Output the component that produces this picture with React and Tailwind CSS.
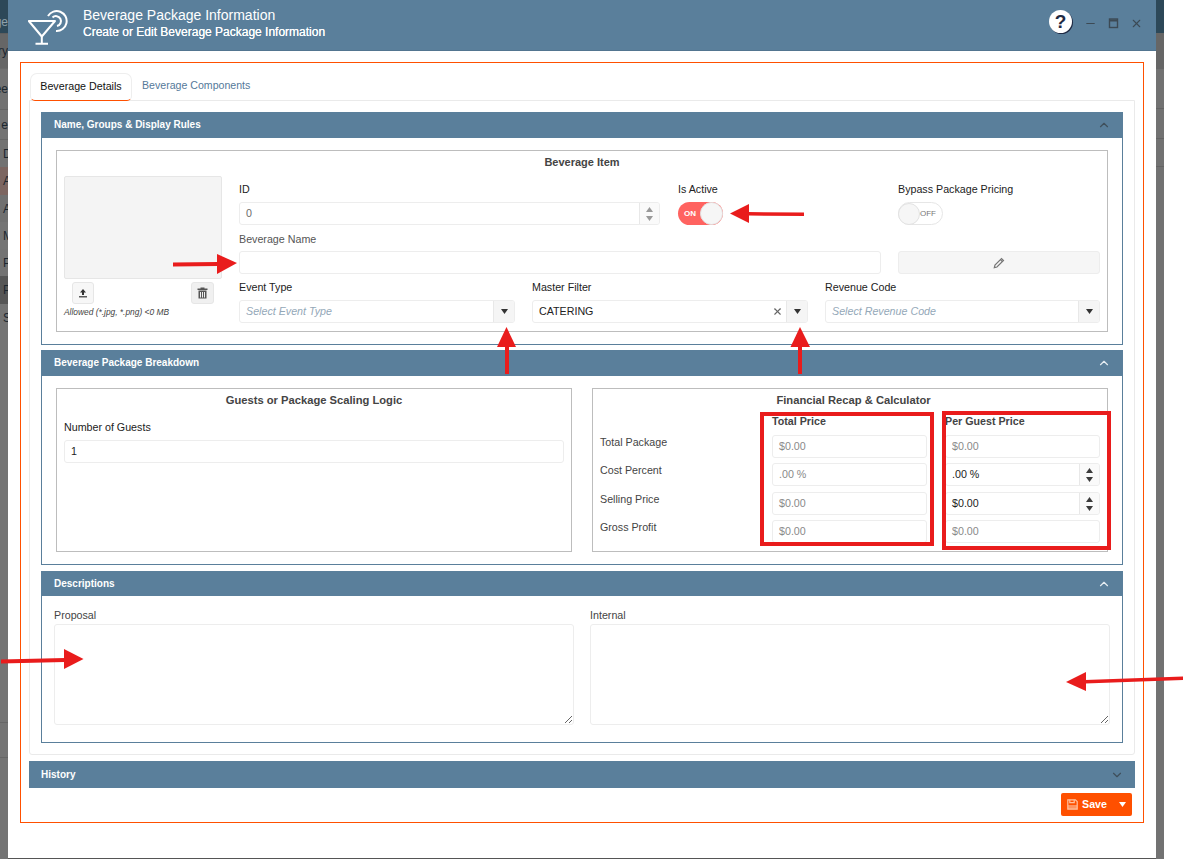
import React from "react";
import { ChevronUp, ChevronDown, X, Minus } from "lucide-react";

const font = { fontFamily: '"Liberation Sans", Arial, sans-serif' };

const stripRows = [
  ["h-[33px] bg-[#2d4858] text-[#8fa0aa] justify-end pt-[10px]", "ge"],
  ["h-[35px] bg-[#666666] border-t border-[#5e5e5e] justify-end", "try"],
  ["h-[41px] bg-[#727272] border-t border-[#6a6a6a] justify-end", "ee"],
  ["h-[30px] bg-[#737373] border-t border-[#666666] justify-end", "e"],
  ["h-[28px] bg-[#727272] border-t border-[#666666] pl-[3px]", "D"],
  ["h-[28px] bg-[#7c6560] pl-[3px]", "A"],
  ["h-[27px] bg-[#707070] pl-[3px]", "A"],
  ["h-[27px] bg-[#747474] pl-[3px]", "M"],
  ["h-[27px] bg-[#737373] pl-[3px]", "P"],
  ["h-[28px] bg-[#565656] pl-[3px]", "P"],
  ["h-[27px] bg-[#747474] pl-[3px]", "S"],
];

function Backdrop() {
  return (
    <div className="w-2 h-[859px] shrink-0 flex flex-col overflow-hidden bg-[#747474] text-[12px] text-[#1c2730]">
      {stripRows.map(([c, t], i) => (
        <div key={i} className={"flex items-center whitespace-nowrap overflow-hidden shrink-0 " + c}>
          {t}
        </div>
      ))}
      <div className="h-[391px] shrink-0" />
      <div className="h-[35px] shrink-0 border-t border-[#666666]" />
      <div className="grow border-t border-[#666666]" />
    </div>
  );
}

function BackdropRight() {
  return (
    <div className="w-2 h-[859px] shrink-0 flex flex-col bg-[#727272]">
      <div className="h-[33px] bg-[#2d4858]" />
      <div className="h-[36px] bg-[#666666]" />
      <div className="h-[40px] border-b border-[#646464]" />
      <div className="h-[30px] border-b border-[#646464]" />
      <div className="h-[28px] border-b border-[#646464]" />
    </div>
  );
}

function Logo() {
  return (
    <svg width="42" height="36" viewBox="0 0 42 36" fill="none" stroke="white" strokeWidth="2" className="ml-5 mt-[10px] shrink-0">
      <path d="M0.8 11 H27 L13.8 26.5 Z" strokeLinejoin="round" />
      <path d="M13.8 26.5 V33.5 M7.5 33.8 H20" />
      <path d="M20 6 A10 10 0 1 1 28 21" />
      <path d="M24.5 7.5 A5 5 0 1 1 29 16" />
    </svg>
  );
}

function SectionHeader({ title, h = "h-[26px]", up = true, light = false, px = "pl-3 pr-[11px]" }) {
  const Icon = up ? ChevronUp : ChevronDown;
  return (
    <div className={"flex items-center justify-between bg-[#5a7f9b] text-white text-[10px] font-bold " + h + " " + px}>
      <span className="pb-[1px]">{title}</span>
      <Icon size={14} strokeWidth={2} className={light ? "text-[#e6edf2]" : "text-[#3f4f5b]"} />
    </div>
  );
}

function Label({ children, className = "" }) {
  return <div className={"text-[10.7px] flex items-center " + className}>{children}</div>;
}

function Field({ children, className = "", bg = "bg-white" }) {
  return (
    <div className={"h-[23px] border border-[#ededed] rounded-[3px] flex items-center text-[10.7px] overflow-hidden " + bg + " " + className}>
      {children}
    </div>
  );
}

function Tri({ className = "" }) {
  return (
    <svg width="7" height="5" viewBox="0 0 7 5" className={className}>
      <path d="M0 0 H7 L3.5 5 Z" fill="currentColor" />
    </svg>
  );
}

function Spinner({ muted = false }) {
  return (
    <div className={"w-[20px] h-full border-l border-[#e8e8e8] flex flex-col items-center justify-center gap-[4px] bg-[#fafafa] " + (muted ? "text-[#9a9a9a]" : "text-[#3c3c3c]")}>
      <Tri className="rotate-180" />
      <Tri />
    </div>
  );
}

function Dropdown() {
  return (
    <div className="w-[21px] h-full border-l border-[#e8e8e8] bg-[#f5f5f5] flex items-center justify-center text-[#333333]">
      <Tri />
    </div>
  );
}

function SelectField({ placeholder, value, clear, className }) {
  return (
    <Field className={className}>
      <span className={"grow pl-[6px] " + (placeholder ? "italic text-[#94a8b8]" : "text-[#222222]")}>{placeholder || value}</span>
      {clear && <X size={11} strokeWidth={2.4} className="mr-[3px] text-[#666666]" />}
      <Dropdown />
    </Field>
  );
}

function Fieldset({ title, className = "", wide = false, children }) {
  return (
    <div className={"border border-[#bdbdbd] " + className}>
      <div className={"h-[21px] mt-px flex items-center justify-center font-bold text-[#444444] " + (wide ? "text-[11.2px]" : "text-[11px]")}>{title}</div>
      {children}
    </div>
  );
}

function MoneyRow({ label, total, perGuest, active, h }) {
  return (
    <div className={"flex " + h}>
      <div className="w-[172px] text-[10.7px] text-[#444444] -mt-[1px]">{label}</div>
      <Field className="w-[155px] pl-[6px] text-[#8a8a8a]">{total}</Field>
      <Field className={"w-[155px] ml-[18px] " + (active ? "text-[#222222]" : "text-[#8a8a8a]")}>
        <span className="grow pl-[6px]">{perGuest}</span>
        {active && <Spinner />}
      </Field>
    </div>
  );
}

function Annotations() {
  const red = "#e91c1c";
  return (
    <svg className="absolute inset-0 pointer-events-none" width="1183" height="859" viewBox="0 0 1183 859">
      <g fill={red} stroke="none">
        <path d="M730 213.5 L749 204 V223 Z" />
        <path d="M748 212 L804 212.5 V216 L748 215.5 Z" />
        <path d="M237 263 L217 254 V274 Z" />
        <path d="M173 262.5 L218 262 V266 L173 266.5 Z" />
        <path d="M506.5 327 L497 347 H516 Z" />
        <path d="M505 346 H509 V374 H505 Z" />
        <path d="M800 327 L790.5 347 H810 Z" />
        <path d="M798 346 H802 V374 H798 Z" />
        <path d="M83.5 659 L64 649 V669 Z" />
        <path d="M1 659.5 L65 658 V662 L1 663.5 Z" />
        <path d="M1066 682 L1086 672 V691 Z" />
        <path d="M1085 680 L1183 676.5 V680 L1085 683.5 Z" />
      </g>
      <rect x="762" y="414" width="170" height="130" fill="none" stroke={red} strokeWidth="4" />
      <rect x="944" y="413" width="165" height="135" fill="none" stroke={red} strokeWidth="4" />
    </svg>
  );
}

export default function App() {
  return (
    <div className="relative w-[1183px] h-[859px] overflow-hidden bg-white flex text-[#222222]" style={font}>
      <Backdrop />
      <div className="w-[1148px] h-[859px] shrink-0 bg-white border-b border-[#555555] flex flex-col">
        <header className="h-[51px] shrink-0 bg-[#5a7f9b] border-b border-[#527590] flex text-white">
          <Logo />
          <div className="ml-[13px] mt-[6px] grow">
            <div className="text-[14px] leading-[18px]">Beverage Package Information</div>
            <div className="text-[12px] leading-[17px] [text-shadow:0_0_0.3px_white]">Create or Edit Beverage Package Information</div>
          </div>
          <div className="flex items-center h-[47px] text-[#3c4a55] gap-[10px] pr-[13px]">
            <div className="w-[23px] h-[23px] mb-[4px] rounded-full bg-white shadow-[1px_1px_0_#1f2a44] flex items-center justify-center text-[#1f2a44] text-[19px] font-bold leading-none mr-[2px]">?</div>
            <Minus size={13} strokeWidth={2} />
            <svg width="13" height="13" viewBox="0 0 13 13" fill="none" stroke="currentColor" strokeWidth="1.4"><rect x="2.5" y="2" width="8" height="8.5" /><path d="M2.5 3.5 H10.5" strokeWidth="2" /></svg>
            <X size={13} strokeWidth={2} />
          </div>
        </header>

        <div className="mt-[11px] mx-3 h-[761px] border border-[#ff5000] px-[8px] pt-[9px] flex flex-col">
          <div className="flex h-[28px] items-end">
            <div className="w-[102px] h-[28px] ml-px -mb-px z-10 bg-white border border-[#eeeeee] border-b-[#ff5000] rounded-t-[7px] rounded-b-[5px] flex items-center justify-center text-[10.7px] text-[#111111] pb-[2px]">Beverage Details</div>
            <div className="h-[28px] flex items-center pl-[10px] text-[10.6px] text-[#55799a]">Beverage Components</div>
          </div>

          <div className="h-[655px] border border-[#eaeaea] rounded-b-[3px] px-[11px] pt-[11px] flex flex-col gap-[5px]">
            <section className="h-[233px] flex flex-col border border-[#5a7f9b] border-t-0">
              <SectionHeader title="Name, Groups & Display Rules" />
              <div className="px-[14px] pt-[12px]">
                <Fieldset title="Beverage Item" className="h-[182px] flex flex-col">
                  <div className="flex pl-[7px] pt-[9px]">
                    <div className="w-[158px] shrink-0 mr-[17px]">
                      <div className="h-[103px] mt-[-6px] bg-[#f4f4f4] border border-[#e6e6e6] rounded-[2px]" />
                      <div className="flex justify-between pl-[8px] pr-[8px] mt-[3px]">
                        <div className="w-[22px] h-[22px] bg-[#f7f7f7] border border-[#e6e6e6] rounded-[3px] flex items-center justify-center">
                          <svg width="10" height="10" viewBox="0 0 10 10" fill="#333333"><path d="M5 1 L8 4.5 H6 V7 H4 V4.5 H2 Z" /><path d="M1 8.2 H9 V9.4 H1 Z" /></svg>
                        </div>
                        <div className="w-[23px] h-[22px] bg-[#f0f0f0] border border-[#e6e6e6] rounded-[3px] flex items-center justify-center">
                          <svg width="11" height="12" viewBox="0 0 11 12" fill="#555555"><path d="M0.5 1.5 H3.5 V0.5 H7.5 V1.5 H10.5 V3 H0.5 Z" /><path fillRule="evenodd" d="M1.5 3.6 H9.5 V11.5 H1.5 Z M3 5 V10.5 H4 V5 Z M5 5 V10.5 H6 V5 Z M7 5 V10.5 H8 V5 Z" /></svg>
                        </div>
                      </div>
                      <div className="mt-[2px] h-[12px] flex items-center text-[8.4px] italic text-[#444444] whitespace-nowrap">{"Allowed (*.jpg, *.png) <0 MB"}</div>
                    </div>
                    <div className="w-[861px] shrink-0">
                      <div className="flex">
                        <div className="w-[421px] mr-[18px]">
                          <Label className="h-5 pb-[6px]">ID</Label>
                          <Field className="text-[#6b6b6b]">
                            <span className="grow pl-[6px]">0</span>
                            <Spinner muted />
                          </Field>
                        </div>
                        <div className="w-[220px]">
                          <Label className="h-5 pb-[6px]">Is Active</Label>
                          <div className="w-[45px] h-[23px] rounded-full bg-[#ff6360] flex items-center justify-between pl-[6px] text-[8px] text-white font-bold">
                            <span>ON</span>
                            <div className="w-[23px] h-[23px] rounded-full bg-[#f6f6f6] border border-[#e2e2e2]" />
                          </div>
                        </div>
                        <div className="w-[202px]">
                          <Label className="h-5 pb-[6px]">Bypass Package Pricing</Label>
                          <div className="w-[45px] h-[23px] rounded-full bg-white border border-[#e6e6e6] flex items-center justify-between pr-[6px] text-[8px] text-[#777777]">
                            <div className="w-[22px] h-[22px] rounded-full bg-[#f6f6f6] border border-[#e2e2e2] -ml-px" />
                            <span>OFF</span>
                          </div>
                        </div>
                      </div>
                      <div className="flex mt-[7px]">
                        <div className="w-[642px] mr-[17px]">
                          <Label className="h-[19px] pb-1 text-[#555555]">Beverage Name</Label>
                          <Field />
                        </div>
                        <div className="w-[202px] pt-[19px]">
                          <Field bg="bg-[#f6f6f6]" className="justify-center">
                            <svg width="12" height="12" viewBox="0 0 11 11" fill="none" stroke="#777777" strokeWidth="1.1"><path d="M1.2 9.8 L1.8 7.4 L7.8 1.4 L9.6 3.2 L3.6 9.2 Z" /><path d="M6.8 2.4 L8.6 4.2" /></svg>
                          </Field>
                        </div>
                      </div>
                      <div className="flex mt-[6px] gap-[17px]">
                        <div className="w-[276px]">
                          <Label className="h-5 pb-[6px]">Event Type</Label>
                          <SelectField placeholder="Select Event Type" />
                        </div>
                        <div className="w-[276px]">
                          <Label className="h-5 pb-[6px]">Master Filter</Label>
                          <SelectField value="CATERING" clear />
                        </div>
                        <div className="w-[275px]">
                          <Label className="h-5 pb-[6px]">Revenue Code</Label>
                          <SelectField placeholder="Select Revenue Code" />
                        </div>
                      </div>
                    </div>
                  </div>
                </Fieldset>
              </div>
            </section>

            <section className="h-[215px] flex flex-col border border-[#5a7f9b] border-t-0">
              <SectionHeader title="Beverage Package Breakdown" light />
              <div className="px-[14px] pt-[12px] flex gap-[20px]">
                <Fieldset title="Guests or Package Scaling Logic" wide className="w-[516px] h-[164px] px-[7px]">
                  <Label className="h-[18px] mt-[7px]">Number of Guests</Label>
                  <Field className="mt-[4px] pl-[6px] text-[#222222]">1</Field>
                </Fieldset>
                <Fieldset title="Financial Recap & Calculator" wide className="w-[516px] h-[164px] pl-[7px]">
                  <div className="flex h-[14px] text-[10.7px] font-bold text-[#444444] mt-[2px]">
                    <div className="w-[172px]" />
                    <div className="w-[155px]">Total Price</div>
                    <div className="ml-[18px]">Per Guest Price</div>
                  </div>
                  <div className="mt-[8px] flex flex-col">
                    <MoneyRow label="Total Package" total="$0.00" perGuest="$0.00" h="h-[28px]" />
                    <MoneyRow label="Cost Percent" total=".00 %" perGuest=".00 %" active h="h-[29px]" />
                    <MoneyRow label="Selling Price" total="$0.00" perGuest="$0.00" active h="h-[28px]" />
                    <MoneyRow label="Gross Profit" total="$0.00" perGuest="$0.00" h="h-[23px]" />
                  </div>
                </Fieldset>
              </div>
            </section>

            <section className="h-[172px] mt-[1px] flex flex-col border border-[#5a7f9b] border-t-0">
              <SectionHeader title="Descriptions" h="h-[25px]" light />
              <div className="px-[12px] flex gap-[16px] pt-[12px]">
                <div className="w-[520px]">
                  <div className="text-[10.7px] text-[#444444] h-[16px] leading-[15px]">Proposal</div>
                  <textarea readOnly className="block w-full h-[101px] border border-[#ededed] rounded-[3px] bg-white" />
                </div>
                <div className="w-[520px]">
                  <div className="text-[10.7px] text-[#444444] h-[16px] leading-[15px]">Internal</div>
                  <textarea readOnly className="block w-full h-[101px] border border-[#ededed] rounded-[3px] bg-white" />
                </div>
              </div>
            </section>
          </div>

          <div className="mt-[6px]">
            <SectionHeader title="History" h="h-[27px]" up={false} />
          </div>
          <div className="flex justify-end mt-[5px] pr-[3px]">
            <div className="w-[71px] h-[23px] bg-[#ff5000] rounded-[2px] flex items-center text-white text-[10.7px] font-bold pl-[6px]">
              <svg width="11" height="11" viewBox="0 0 11 11" fill="none" stroke="#ffc2a0" strokeWidth="1.2"><path d="M0.8 0.8 H8.4 L10.2 2.6 V10.2 H0.8 Z" /><path d="M2.8 0.8 V3.6 H7.2 V0.8" /><path d="M1 6 H10 V10 H1 Z" fill="#ffc2a0" stroke="none" opacity="0.6" /></svg>
              <span className="ml-[4px] grow">Save</span>
              <Tri className="mr-[6px]" />
            </div>
          </div>
        </div>
      </div>
      <BackdropRight />
      <Annotations />
    </div>
  );
}
